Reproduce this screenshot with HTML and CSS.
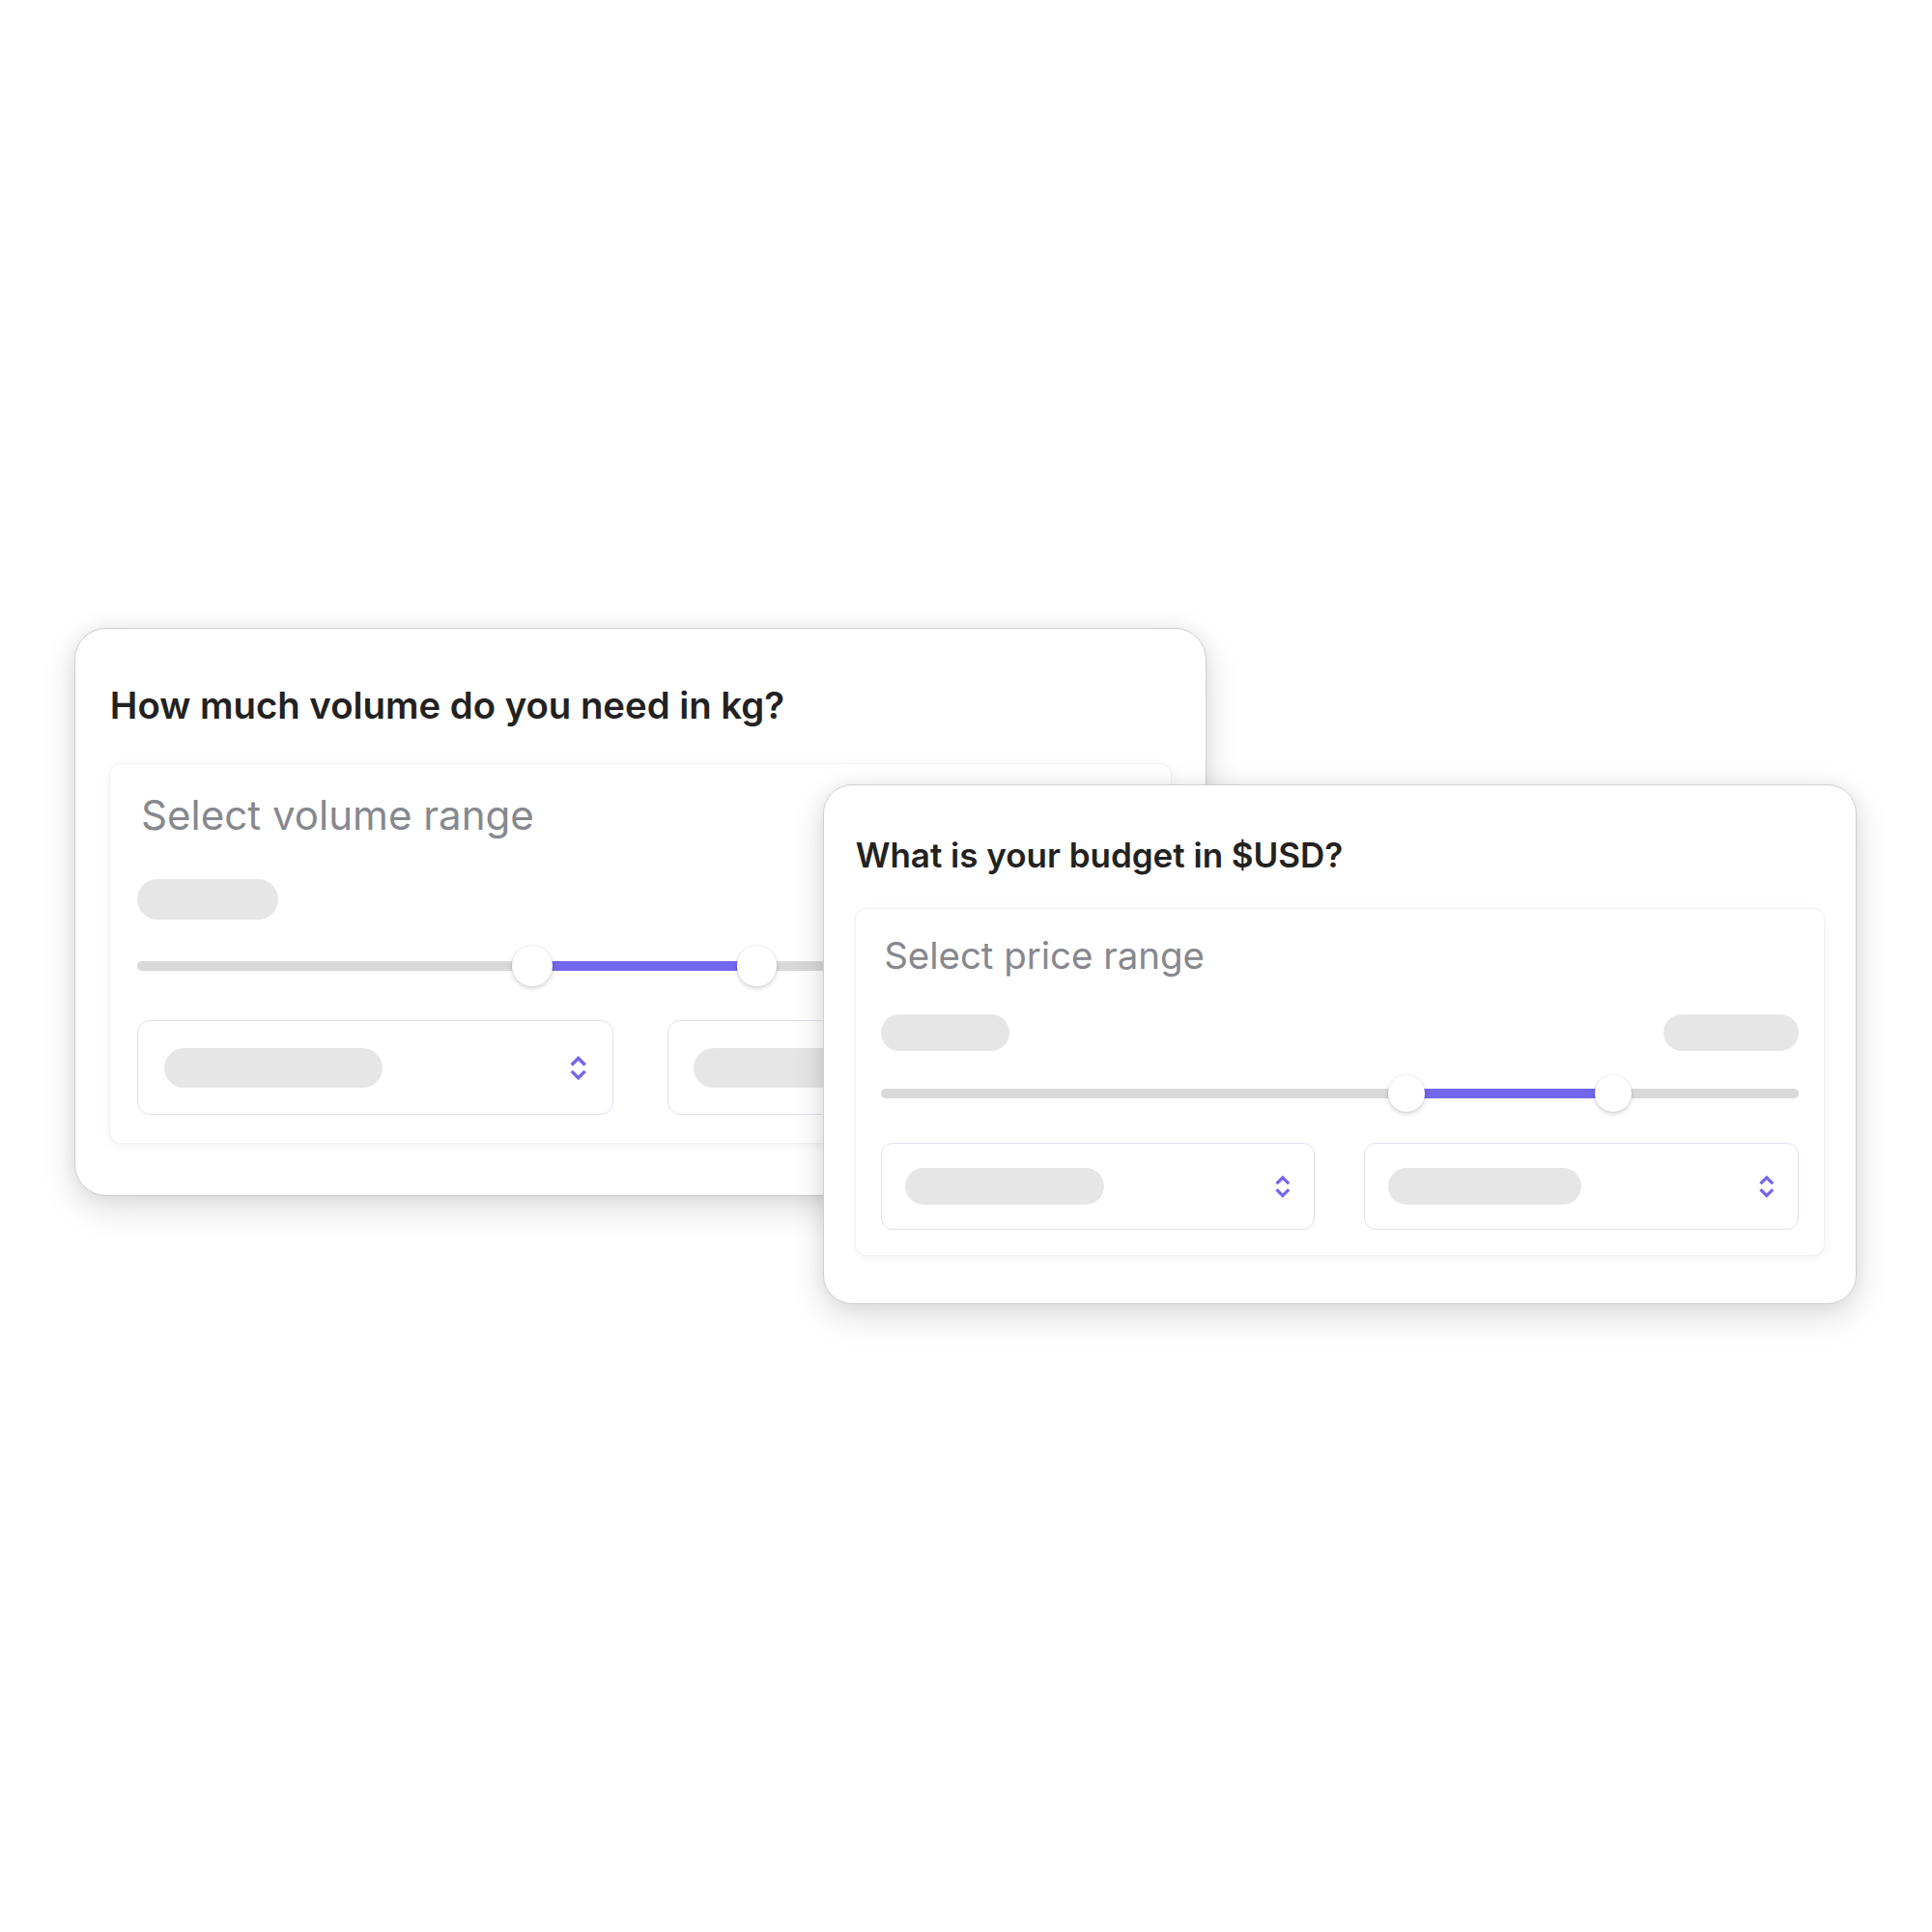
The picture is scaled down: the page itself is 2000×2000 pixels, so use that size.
FILE: index.html
```html
<!DOCTYPE html>
<html lang="en">

<head>
    <meta charset="UTF-8">
    <meta name="viewport" content="width=device-width, initial-scale=1.0">
    <title>Range questions</title>
    <link rel="stylesheet" href="styles.css">
</head>

<body>

    <div class="stage">

        <!-- thẻ câu hỏi khối lượng (to hơn một chút) -->
        <div class="card card-large">
            <h2 class="card-title">How much volume do you need in kg?</h2>
            <div class="panel">
                <div class="panel-label">Select volume range</div>
                <div class="pill-row">
                    <span class="pill pill-min"></span>
                    <span class="pill pill-max"></span>
                </div>
                <div class="slider">
                    <div class="track">
                        <div class="fill" style="left: 39.3%; width: 22.3%;"></div>
                        <span class="thumb" style="left: 39.3%;"></span>
                        <span class="thumb" style="left: 61.6%;"></span>
                    </div>
                </div>
                <div class="selects">
                    <div class="select-box">
                        <span class="pill pill-value"></span>
                        <svg class="chevrons" viewBox="0 0 18 27">
                            <polyline points="2.5,10.5 9,4 15.5,10.5" />
                            <polyline points="2.5,16.5 9,23 15.5,16.5" />
                        </svg>
                    </div>
                    <div class="select-box">
                        <span class="pill pill-value"></span>
                        <svg class="chevrons" viewBox="0 0 18 27">
                            <polyline points="2.5,10.5 9,4 15.5,10.5" />
                            <polyline points="2.5,16.5 9,23 15.5,16.5" />
                        </svg>
                    </div>
                </div>
            </div>
        </div>

        <!-- thẻ câu hỏi ngân sách, nằm đè lên thẻ trên -->
        <div class="card card-front">
            <h2 class="card-title">What is your budget in $USD?</h2>
            <div class="panel">
                <div class="panel-label">Select price range</div>
                <div class="pill-row">
                    <span class="pill pill-min"></span>
                    <span class="pill pill-max"></span>
                </div>
                <div class="slider">
                    <div class="track">
                        <div class="fill" style="left: 57.3%; width: 22.5%;"></div>
                        <span class="thumb" style="left: 57.3%;"></span>
                        <span class="thumb" style="left: 79.8%;"></span>
                    </div>
                </div>
                <div class="selects">
                    <div class="select-box">
                        <span class="pill pill-value"></span>
                        <svg class="chevrons" viewBox="0 0 18 27">
                            <polyline points="2.5,10.5 9,4 15.5,10.5" />
                            <polyline points="2.5,16.5 9,23 15.5,16.5" />
                        </svg>
                    </div>
                    <div class="select-box">
                        <span class="pill pill-value pill-value-short"></span>
                        <svg class="chevrons" viewBox="0 0 18 27">
                            <polyline points="2.5,10.5 9,4 15.5,10.5" />
                            <polyline points="2.5,16.5 9,23 15.5,16.5" />
                        </svg>
                    </div>
                </div>
            </div>
        </div>

    </div>

</body>

</html>
```

FILE: styles.css
```css
body {
    margin: 0;
    background-color: #ffffff;
    font-family: 'Inter', 'Liberation Sans', sans-serif;
}

.stage {
    position: relative;
    width: 2000px;
    height: 2000px;
    padding: 650px 0 0 77px;
    box-sizing: border-box;
}

/* mọi kích thước trong thẻ tính theo em, thẻ to chỉ đổi font-size */
.card {
    font-size: 26px;
    width: 41.15em;
    box-sizing: border-box;
    padding: 1.96em 1.26em 1.92em;
    background-color: #ffffff;
    border: 1px solid #cfcfd2;
    border-radius: 1.15em;
    box-shadow: 0 12px 36px rgba(0, 0, 0, 0.14), 0 0 18px rgba(0, 0, 0, 0.06);
}

.card-large {
    font-size: 28.47px;
}

.card-front {
    position: absolute;
    left: 852px;
    top: 812px;
}

.card-title {
    margin: 0;
    font-size: 1.346em;
    line-height: 1.2;
    font-weight: 600;
    color: #222222;
}

.panel {
    margin-top: 1.33em;
    padding: 1em;
    background-color: #ffffff;
    border-radius: 0.4em;
    box-shadow: 0 0 0 1px #f1f2f7, 0 2px 10px rgba(190, 196, 220, 0.25);
}

.panel-label {
    font-size: 1.478em;
    line-height: 1.18;
    padding-left: 0.09em;
    color: #86888e;
}

.pill-row {
    display: flex;
    justify-content: space-between;
    margin-top: 1.46em;
}

.pill {
    display: block;
    height: 1.46em;
    border-radius: 999px;
    background-color: #e6e6e6;
}

.pill-min {
    width: 5.12em;
}

.pill-max {
    width: 5.38em;
}

.pill-value {
    width: 7.95em;
}

.pill-value-short {
    width: 7.69em;
}

.slider {
    display: flex;
    align-items: center;
    height: 1.47em;
    margin-top: 0.96em;
}

.track {
    position: relative;
    flex: 1;
    height: 0.36em;
    border-radius: 999px;
    background-color: #d9d9d9;
}

.fill {
    position: absolute;
    top: 0;
    bottom: 0;
    background-color: #7367ee;
}

.thumb {
    position: absolute;
    top: 50%;
    width: 1.47em;
    height: 1.47em;
    margin: -0.735em 0 0 -0.735em;
    border-radius: 50%;
    background-color: #ffffff;
    box-shadow: 0 2px 5px rgba(0, 0, 0, 0.18), 0 0 0 1px rgba(0, 0, 0, 0.03);
}

.selects {
    display: grid;
    grid-template-columns: 1fr 1fr;
    gap: 1.96em;
    margin-top: 1.24em;
}

.select-box {
    display: flex;
    align-items: center;
    justify-content: space-between;
    height: 3.44em;
    box-sizing: border-box;
    padding: 0 0.9em 0 0.92em;
    border: 1.5px solid #dde0ef;
    border-radius: 0.46em;
}

.chevrons {
    width: 0.68em;
    height: 1.03em;
    fill: none;
    stroke: #7367ee;
    stroke-width: 3.2;
}
```
